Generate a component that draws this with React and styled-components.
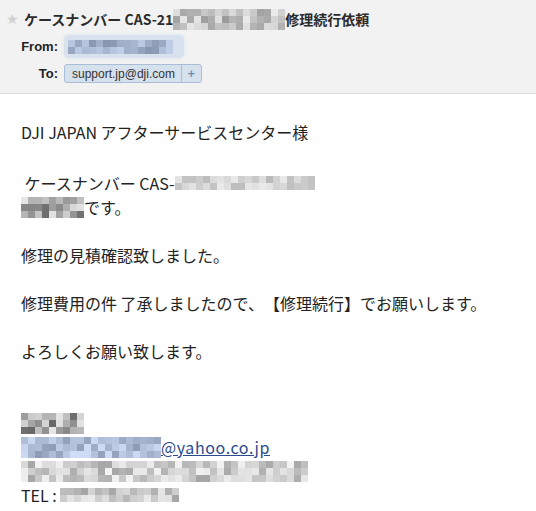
import React from "react";
import styled, { createGlobalStyle } from "styled-components";

const GlobalStyle = createGlobalStyle`
  html, body {
    margin: 0;
    padding: 0;
    background: #fff;
  }
  body {
    font-family: "Noto Sans CJK JP", "Noto Sans", sans-serif;
    color: #222;
    text-spacing-trim: space-all;
  }
`;

// deterministic grey level for a redaction cell
function shade(seed, i, min, max) {
  const x = Math.sin(seed * 97.13 + i * 12.9898) * 43758.5453;
  const f = x - Math.floor(x);
  return Math.round(min + f * (max - min));
}

function Mosaic({ cols, rows, cell = 7, seed = 1, min = 170, max = 240, tint = false }) {
  const cells = [];
  for (let i = 0; i < cols * rows; i++) {
    const v = shade(seed, i, min, max);
    const color = tint
      ? `rgb(${v - 28}, ${v - 14}, ${Math.min(255, v + 12)})`
      : `rgb(${v}, ${v}, ${v})`;
    cells.push(<MosaicCell key={i} style={{ background: color }} />);
  }
  return (
    <MosaicGrid $cols={cols} $cell={cell}>
      {cells}
    </MosaicGrid>
  );
}

export default function App() {
  return (
    <>
      <GlobalStyle />
      <Mail>
        <Header>
          <Subject>
            <Star>★</Star>
            <SubjectText>
              ケースナンバー CAS-21
              <Mosaic cols={16} rows={3} cell={7} seed={3} min={150} max={235} />
              修理続行依頼
            </SubjectText>
          </Subject>
          <AddrRow>
            <Label>From:</Label>
            <SenderPill>
              <Mosaic cols={15} rows={2} cell={7} seed={7} min={160} max={225} tint />
            </SenderPill>
          </AddrRow>
          <AddrRow>
            <Label>To:</Label>
            <Chip>
              <ChipText>support.jp@dji.com</ChipText>
              <ChipAdd>+</ChipAdd>
            </Chip>
          </AddrRow>
        </Header>

        <Body>
          <Line>DJI JAPAN アフターサービスセンター様</Line>
          <Blank $h={27} />
          <Line>
            &nbsp;ケースナンバー CAS-
            <Mosaic cols={20} rows={2} cell={7} seed={11} min={185} max={235} />
          </Line>
          <Line>
            <Mosaic cols={9} rows={3} cell={7} seed={5} min={110} max={235} />
            です。
          </Line>
          <Blank />
          <Line>修理の見積確認致しました。</Line>
          <Blank />
          <Line>修理費用の件 了承しましたので、【修理続行】でお願いします。</Line>
          <Blank />
          <Line>よろしくお願い致します。</Line>
          <Blank />
          <Blank />
          <Line>
            <Mosaic cols={9} rows={3} cell={7} seed={9} min={100} max={235} />
          </Line>
          <Line>
            <Mosaic cols={20} rows={3} cell={7} seed={13} min={170} max={235} tint />
            <MailLink href="#">@yahoo.co.jp</MailLink>
          </Line>
          <Line>
            <Mosaic cols={41} rows={3} cell={7} seed={17} min={165} max={245} />
          </Line>
          <Line>
            TEL :&nbsp;
            <Mosaic cols={17} rows={2} cell={7} seed={19} min={165} max={235} />
          </Line>
        </Body>
      </Mail>
    </>
  );
}

const Mail = styled.div`
  width: 536px;
  min-height: 511px;
  background: #fff;
`;

const Header = styled.div`
  background: #f2f2f2;
  border-bottom: 1px solid #dcdcdc;
  padding: 8px 0 10px 6px;
  display: flex;
  flex-direction: column;
`;

const Subject = styled.div`
  display: flex;
  align-items: center;
  height: 22px;
  margin-bottom: 5px;
`;

const Star = styled.span`
  color: #d0d0d0;
  font-family: "DejaVu Sans", sans-serif;
  font-size: 14px;
  width: 18px;
`;

const SubjectText = styled.span`
  display: flex;
  align-items: center;
  font-size: 14px;
  font-weight: bold;
  color: #2b2b2b;
  white-space: nowrap;
`;

const AddrRow = styled.div`
  display: flex;
  align-items: center;
  margin-bottom: 6px;
  &:last-child {
    margin-bottom: 0;
  }
`;

const Label = styled.span`
  width: 52px;
  margin-right: 6px;
  text-align: right;
  font-family: "Liberation Sans", Arial, sans-serif;
  font-size: 13px;
  font-weight: bold;
  color: #222;
`;

const SenderPill = styled.div`
  display: flex;
  align-items: center;
  width: 120px;
  height: 23px;
  box-sizing: border-box;
  padding: 0 8px 0 4px;
  border-radius: 5px;
  background: #d8e2ee;
  box-shadow: 0 0 3px 1px #e3e9f1;
`;

const Chip = styled.div`
  display: flex;
  align-items: stretch;
  height: 19px;
  box-sizing: border-box;
  border: 1px solid #a9bdd6;
  border-radius: 3px;
  background: #d6e1ee;
`;

const ChipText = styled.span`
  display: flex;
  align-items: center;
  padding: 0 6px 0 7px;
  font-family: "Liberation Sans", Arial, sans-serif;
  font-size: 12px;
  color: #333;
  border-right: 1px solid #a9bdd6;
`;

const ChipAdd = styled.span`
  display: flex;
  align-items: center;
  justify-content: center;
  width: 19px;
  font-family: "Liberation Sans", Arial, sans-serif;
  font-size: 13px;
  font-weight: bold;
  color: #7690b3;
`;

const Body = styled.div`
  padding: 26px 0 0 21px;
  font-size: 16px;
  line-height: 24px;
`;

const Line = styled.div`
  display: flex;
  align-items: center;
  height: 24px;
  white-space: nowrap;
`;

const Blank = styled.div`
  height: ${(p) => p.$h || 24}px;
`;

const MosaicGrid = styled.span`
  display: inline-grid;
  grid-template-columns: repeat(${(p) => p.$cols}, ${(p) => p.$cell}px);
  grid-auto-rows: ${(p) => p.$cell}px;
  flex-shrink: 0;
`;

const MosaicCell = styled.span`
  display: block;
`;

const MailLink = styled.a`
  color: #2a4b8d;
  text-decoration: underline;
  letter-spacing: 0.6px;
`;
